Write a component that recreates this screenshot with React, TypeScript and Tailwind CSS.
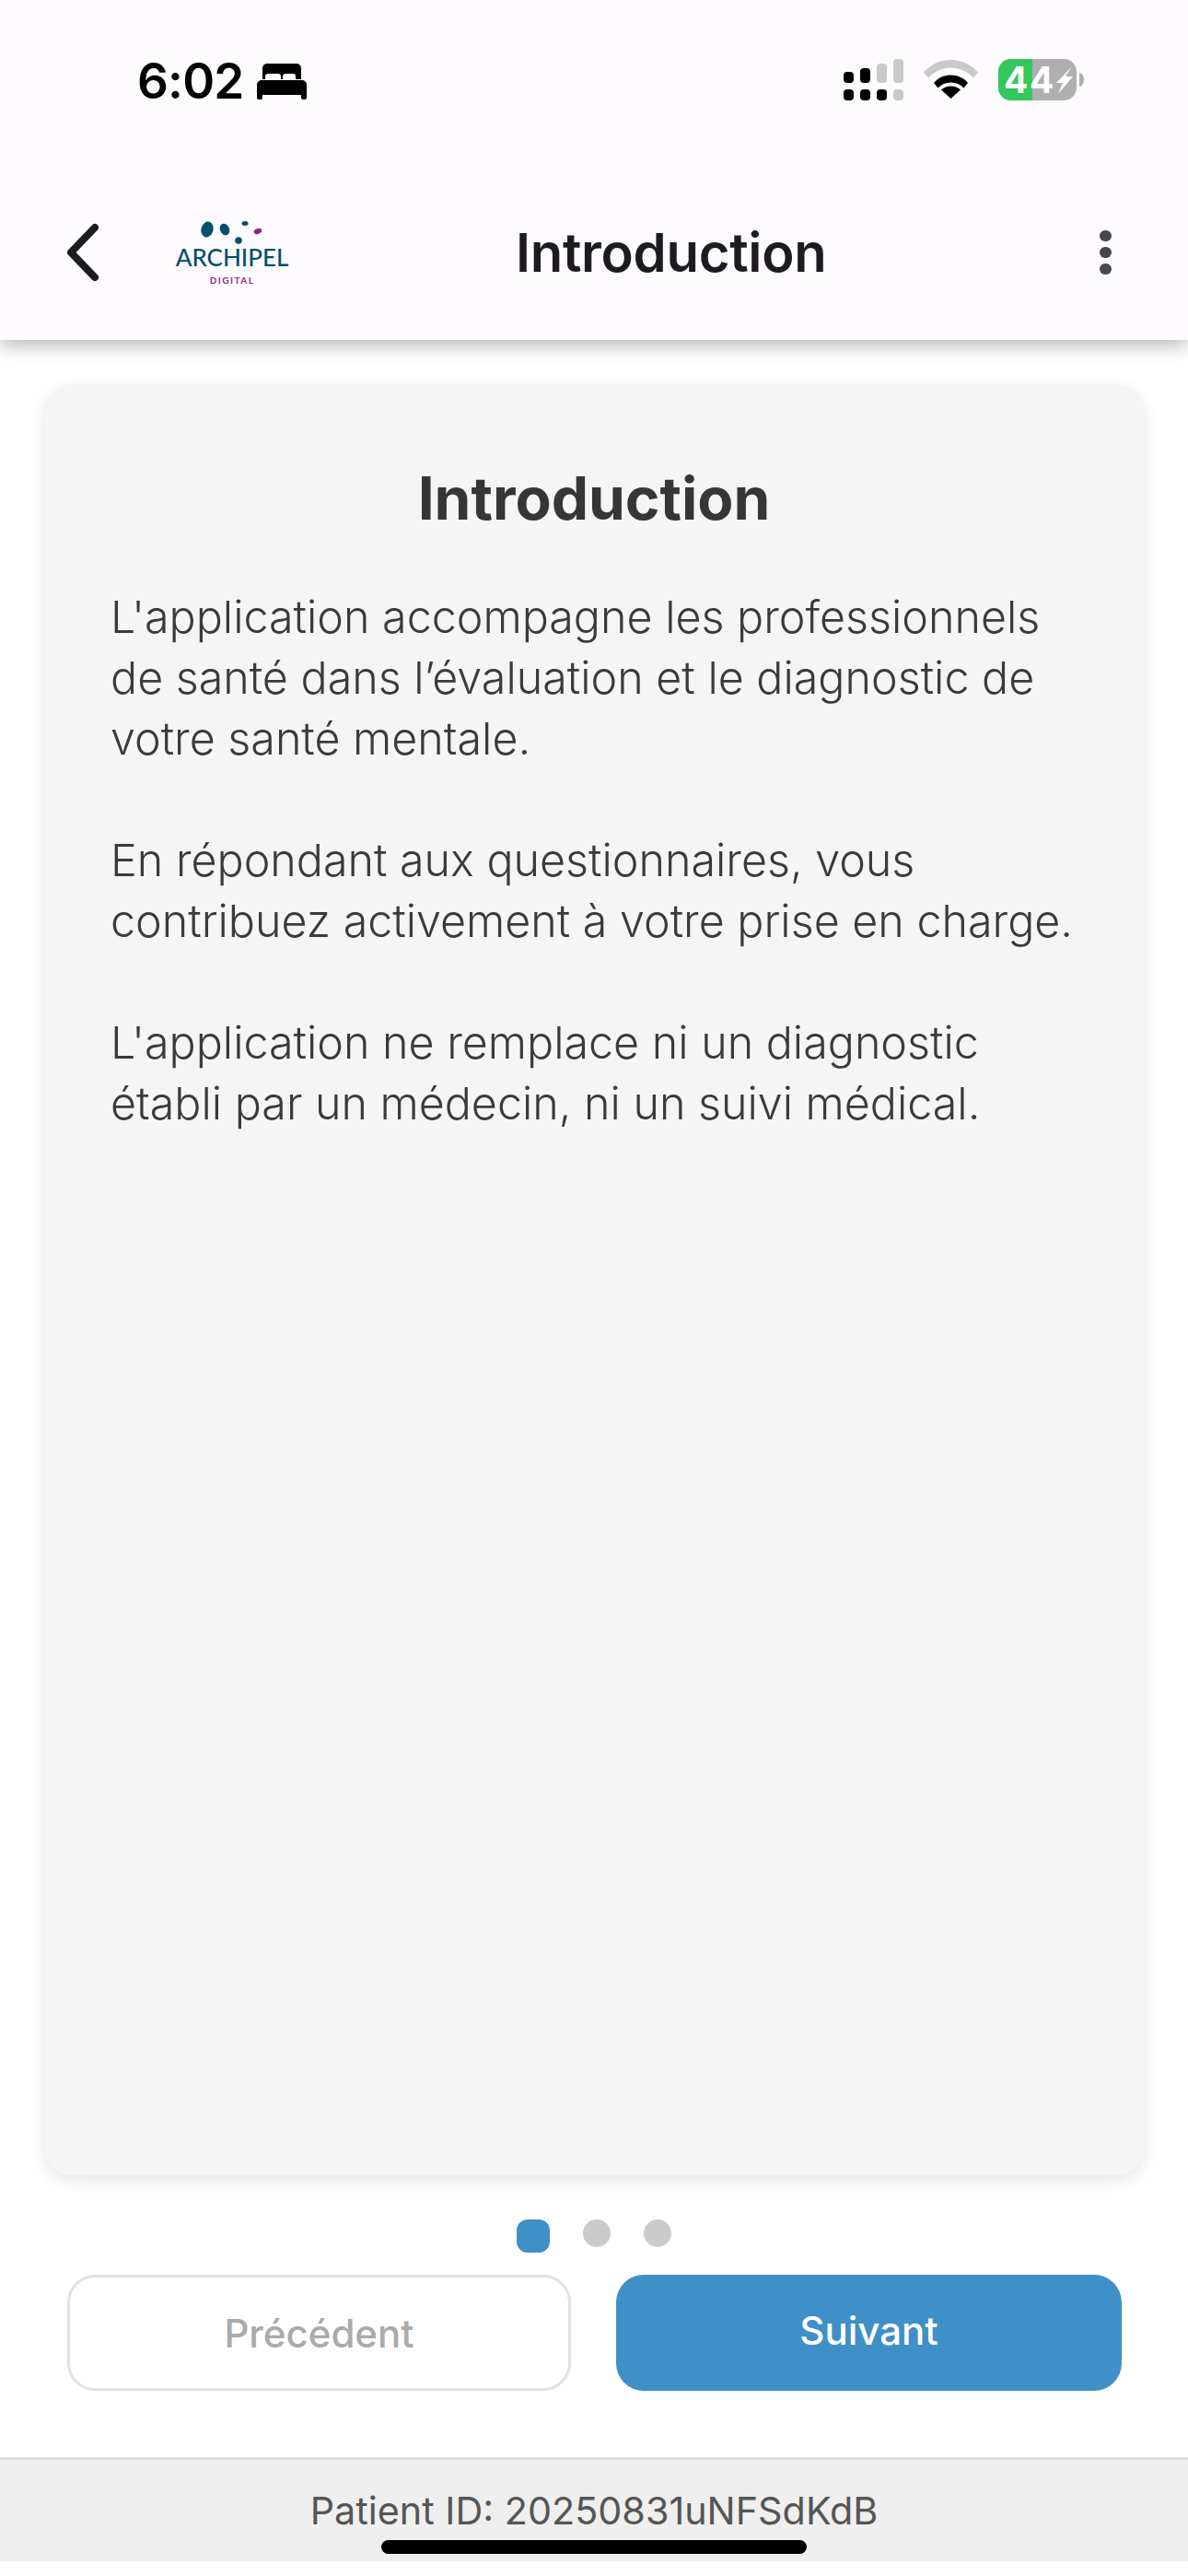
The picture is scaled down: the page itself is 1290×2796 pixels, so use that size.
import React from "react";

const SANS = "font-['Inter','Noto_Sans',sans-serif]";

// ─── Status bar icons ─────────────────────────────────────────────────────────

function BedIcon() {
  return (
    <svg width="54" height="39" viewBox="0 0 54 39" fill="#000">
      <path d="M6 17V5a5 5 0 0 1 5-5h32a5 5 0 0 1 5 5v12h-6v-3a3 3 0 0 0-3-3H31a3 3 0 0 0-3 3v3h-2v-3a3 3 0 0 0-3-3H12a3 3 0 0 0-3 3v3z" />
      <path d="M5 18h44a5 5 0 0 1 5 5v14a2 2 0 0 1-2 2h-2a2 2 0 0 1-2-2v-3H6v3a2 2 0 0 1-2 2H2a2 2 0 0 1-2-2V23a5 5 0 0 1 5-5z" />
    </svg>
  );
}

function SignalIcon() {
  const on = "#000";
  const off = "#cbc8cc";
  return (
    <svg width="65" height="45" viewBox="0 0 65 45">
      <rect x="0" y="14" width="11" height="12" rx="4" fill={on} />
      <rect x="18" y="10" width="11" height="16" rx="4" fill={on} />
      <rect x="36" y="5" width="11" height="21" rx="4" fill={off} />
      <rect x="54" y="0" width="11" height="26" rx="4" fill={off} />
      <rect x="0" y="33" width="11" height="12" rx="4" fill={on} />
      <rect x="18" y="33" width="11" height="12" rx="4" fill={on} />
      <rect x="36" y="33" width="11" height="12" rx="4" fill={on} />
      <rect x="54" y="33" width="11" height="12" rx="4" fill={off} />
    </svg>
  );
}

function WifiIcon() {
  return (
    <svg width="59" height="43" viewBox="0 0 59 43">
      <path d="M0 14.500C7.500 6 18 1 29.500 1S51.500 6 59 14.500L54 20.500C47.500 13.500 39 9.500 29.500 9.500S11.500 13.500 5 20.500z" fill="#cbc8cc" />
      <path d="M11 26C15.500 20.500 22 17.500 29.500 17.500S43.500 20.500 48 26L43.500 31.500C40 27.500 35 25.500 29.500 25.500S19 27.500 15.500 31.500z" fill="#000" />
      <path d="M19 33.500C22 30.800 25.500 29.500 29.500 29.500S37 30.800 40 33.500L29.500 43z" fill="#000" />
    </svg>
  );
}

function BatteryIcon() {
  return (
    <svg width="93" height="45" viewBox="0 0 93 45">
      <rect x="0" y="0" width="85" height="45" rx="14" fill="#b0aeb0" />
      <path d="M14 0h23v45H14A14 14 0 0 1 0 31V14A14 14 0 0 1 14 0z" fill="#34c759" />
      <path d="M88 15c3 .5 5 3.500 5 7.500s-2 7-5 7.500z" fill="#b0aeb0" />
      <text x="6" y="37" fill="#fff" fontSize="39" fontWeight="700" fontFamily="Inter, sans-serif">4</text>
      <text x="34" y="37" fill="#fff" fontSize="39" fontWeight="700" fontFamily="Inter, sans-serif">4</text>
      <path d="M80 8 63 26h7l-5 12 16-19h-8z" fill="#fff" />
    </svg>
  );
}

// ─── Archipel logo ────────────────────────────────────────────────────────────

function ArchipelLogo() {
  return (
    <div className="w-[122px] flex flex-col items-center">
      <svg width="70" height="26" viewBox="0 0 70 26" className="ml-[2px]">
        <ellipse cx="7" cy="10" rx="6.500" ry="8.500" transform="rotate(15 7 10)" fill="#034f6d" />
        <ellipse cx="26" cy="10" rx="5" ry="6.500" transform="rotate(-25 26 10)" fill="#034f6d" />
        <ellipse cx="48" cy="3.500" rx="3.500" ry="2.500" fill="#034f6d" />
        <ellipse cx="62" cy="12" rx="4.500" ry="2.800" transform="rotate(-20 62 12)" fill="#8b2a80" />
        <circle cx="41" cy="22" r="3.800" fill="#034f6d" />
      </svg>
      <span className="font-['Lato',sans-serif] text-[26px] leading-[22px] font-medium text-[#034f6d] mt-[3px] whitespace-nowrap">
        ARCHIPEL
      </span>
      <span className="font-['Lato',sans-serif] text-[10px] leading-[10px] font-bold tracking-[1.500px] text-[#8b2a80] mt-[9px] whitespace-nowrap">
        DIGITAL
      </span>
    </div>
  );
}

// ─── Page ─────────────────────────────────────────────────────────────────────

const DOTS = ["active", "idle", "idle"];

export default function App() {
  return (
    <div className={`${SANS} relative w-[1290px] h-[2796px] bg-white flex flex-col overflow-hidden`}>
      {/* Status bar + app bar */}
      <header className="relative z-10 h-[369px] shrink-0 bg-[#fefbff] shadow-[0_6px_18px_rgba(0,0,0,0.28)]">
        <div className="flex items-start justify-between pl-[149px] pr-[113px] pt-[64px]">
          <div className="flex items-center gap-[14px]">
            <span className="text-[53px] leading-[48px] font-semibold text-black tracking-[-0.8px]">6:02</span>
            <BedIcon />
          </div>
          <div className="flex items-start gap-[22px]">
            <SignalIcon />
            <WifiIcon />
            <BatteryIcon />
          </div>
        </div>
        <div className="flex items-center mt-[127px] pl-[72px] pr-[83px]">
          <svg width="36" height="64" viewBox="0 0 36 64" fill="none">
            <path d="M31 5 5 32l26 27" stroke="#1d1b20" strokeWidth="8" strokeLinecap="round" strokeLinejoin="round" />
          </svg>
          <div className="ml-[83px]">
            <ArchipelLogo />
          </div>
          <h1 className="ml-[247px] text-[58px] leading-[64px] font-semibold tracking-[-0.3px] text-[#1d1b20] whitespace-nowrap">Introduction</h1>
          <div className="ml-auto flex flex-col gap-[6px]">
            <span className="w-[13px] h-[12px] rounded-full bg-[#49454f]" />
            <span className="w-[13px] h-[12px] rounded-full bg-[#49454f]" />
            <span className="w-[13px] h-[12px] rounded-full bg-[#49454f]" />
          </div>
        </div>
      </header>

      {/* Card */}
      <main className="flex-1 flex flex-col pt-[48px]">
        <section className="mx-[48px] h-[1944px] rounded-[30px] bg-[#f5f5f5] shadow-[0_6px_18px_rgba(0,0,0,0.1)] pt-[88px] px-[72px]">
          <h2 className="text-center text-[64px] leading-[72px] font-bold text-[#363638]">Introduction</h2>
          <div className="mt-[60px] text-[48.400px] leading-[66px] font-[350] text-[#3a3a3c] whitespace-nowrap">
            <p>
              L'application accompagne les professionnels
              <br />
              de santé dans l’évaluation et le diagnostic de
              <br />
              votre santé mentale.
            </p>
            <p className="mt-[66px]">
              En répondant aux questionnaires, vous
              <br />
              contribuez activement à votre prise en charge.
            </p>
            <p className="mt-[66px]">
              L'application ne remplace ni un diagnostic
              <br />
              établi par un médecin, ni un suivi médical.
            </p>
          </div>
        </section>

        {/* Pager */}
        <div className="mt-[48px] flex justify-center items-start gap-[36px]">
          {DOTS.map((d, i) =>
            d === "active" ? (
              <span key={i} className="w-[36px] h-[36px] rounded-[12px] bg-[#3f90c6]" />
            ) : (
              <span key={i} className="w-[30px] h-[30px] rounded-full bg-[#cbcbcb]" />
            ),
          )}
        </div>

        {/* Buttons */}
        <div className="mt-[24px] flex gap-[49px] pl-[73px] pr-[72px]">
          <button className="w-[547px] h-[126px] rounded-[30px] border-[3px] border-[#e2e2e2] bg-white text-[42px] font-medium text-[#aaaaaa]">
            Précédent
          </button>
          <button className="w-[549px] h-[126px] rounded-[30px] bg-[#3f90c6] text-[42px] font-medium text-white pb-[6px]">
            Suivant
          </button>
        </div>
      </main>

      {/* Patient footer */}
      <footer className="h-[113px] mb-[16px] shrink-0 border-t-[3px] border-[#dddddd] bg-[#efefef] pt-[30px] text-center text-[41.300px] leading-[50px] text-[#555555]">
        Patient ID: 20250831uNFSdKdB
      </footer>

      {/* Home indicator */}
      <div className="absolute left-[414px] top-[2757px] w-[462px] h-[15px] rounded-full bg-black" />
    </div>
  );
}
